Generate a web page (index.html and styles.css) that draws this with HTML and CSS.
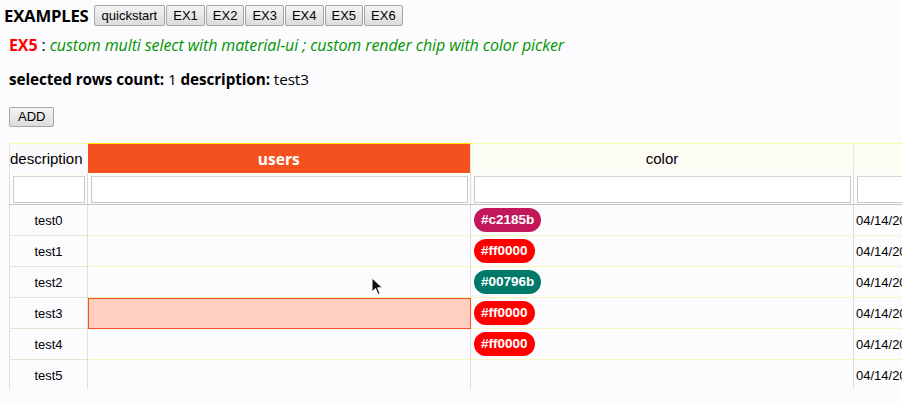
FILE: index.html
```html
<!DOCTYPE html>
<html>
<head>
<meta charset="utf-8">
<link rel="stylesheet" href="styles.css">
</head>
<body>
<div class="topbar">
  <span class="title">EXAMPLES</span>
  <div class="btns">
    <button class="btn">quickstart</button><button class="btn">EX1</button><button class="btn">EX2</button><button class="btn">EX3</button><button class="btn">EX4</button><button class="btn">EX5</button><button class="btn">EX6</button>
  </div>
</div>
<p class="desc"><span class="ex">EX5</span> : <em class="green">custom multi select with material-ui ; custom render chip with color picker</em></p>
<p class="sel"><b>selected rows count:</b> 1 <b>description:</b> test3</p>
<div class="addrow"><button class="btn add">ADD</button></div>
<div class="grid">
  <table>
    <colgroup>
      <col class="c-desc"><col class="c-users"><col class="c-color"><col class="c-date">
    </colgroup>
    <thead>
      <tr class="hdr">
        <th class="h-desc">description</th>
        <th class="h-users">users</th>
        <th class="h-color">color</th>
        <th class="h-date"></th>
      </tr>
      <tr class="filters">
        <td><input class="f"></td>
        <td><input class="f"></td>
        <td><input class="f"></td>
        <td><input class="f"></td>
      </tr>
    </thead>
    <tbody>
      <tr><td class="d">test0</td><td class="u"></td><td class="c"><span class="chip" style="background:#c2185b">#c2185b</span></td><td class="dt">04/14/20</td></tr>
      <tr><td class="d">test1</td><td class="u"></td><td class="c"><span class="chip" style="background:#ff0000">#ff0000</span></td><td class="dt">04/14/20</td></tr>
      <tr><td class="d">test2</td><td class="u"></td><td class="c"><span class="chip" style="background:#00796b">#00796b</span></td><td class="dt">04/14/20</td></tr>
      <tr><td class="d">test3</td><td class="u selected"></td><td class="c"><span class="chip" style="background:#ff0000">#ff0000</span></td><td class="dt">04/14/20</td></tr>
      <tr><td class="d">test4</td><td class="u"></td><td class="c"><span class="chip" style="background:#ff0000">#ff0000</span></td><td class="dt">04/14/20</td></tr>
      <tr><td class="d">test5</td><td class="u"></td><td class="c"></td><td class="dt">04/14/20</td></tr>
    </tbody>
  </table>
</div>
<svg class="cursor" width="14" height="20" viewBox="0 0 14 20"><path d="M1 1 L1 15 L4.5 11.5 L7 17.5 L9 16.6 L6.6 10.8 L11.5 10.8 Z" fill="#111" stroke="#fff" stroke-width="1"/></svg>
</body>
</html>
```
FILE: styles.css
```css
html, body { margin: 0; padding: 0; }
body {
  background: #fcfcff;
  font-family: "Liberation Sans", Arial, sans-serif;
  color: #000;
  width: 902px;
  height: 406px;
  overflow: hidden;
  position: relative;
}
.topbar {
  display: flex;
  align-items: center;
  padding: 5px 0 0 4px;
  height: 21px;
}
.title {
  font-family: "Open Sans", sans-serif;
  font-weight: 700;
  font-size: 16.7px;
  letter-spacing: -0.2px;
  margin-right: 5px;
}
.btns { display: flex; gap: 0; }
.btn {
  font-family: "Liberation Sans", Arial, sans-serif;
  font-size: 13px;
  height: 21px;
  padding: 0 6px;
  margin: 0 1px 0 0;
  border: 1px solid #a6a6a6;
  border-radius: 2px;
  background: linear-gradient(#f4f4f4, #dcdcdc);
  color: #000;
  line-height: 19px;
}
.btns .btn:first-child { padding: 0 7px; }
.desc {
  margin: 9px 0 0 9px;
  font-family: "Open Sans", sans-serif;
  font-size: 16px;
  height: 20px;
  line-height: 20px;
  letter-spacing: -0.1px;
}
.ex { color: #ff0000; font-weight: 700; }
.green { color: #009400; }
.sel {
  margin: 14px 0 0 9px;
  font-family: "Open Sans", sans-serif;
  font-size: 15.3px;
  height: 20px;
  line-height: 20px;
  letter-spacing: -0.1px;
}
.addrow { padding: 18px 0 0 9px; height: 20px; }
.btn.add { height: 20px; padding: 0 8px; line-height: 18px; }
.grid {
  margin: 16px 0 0 9px;
  width: 893px;
  height: 246px;
  overflow: hidden;
}
table {
  border-collapse: collapse;
  table-layout: fixed;
  width: 1100px;
}
.c-desc { width: 78px; }
.c-users { width: 383px; }
.c-color { width: 383px; }
.c-date { width: 256px; }
th, td { padding: 0; }
.hdr th {
  height: 29px;
  font-weight: 400;
  font-size: 15px;
  border-top: 1px solid #fbfbb0;
  border-left: 1px solid #e6e6e6;
  background: #fdfdf6;
}
.hdr .h-desc { text-align: left; background: #fafafd; }
.hdr .h-users {
  background: #f4511e;
  color: #fff;
  font-family: "Open Sans", sans-serif;
  font-weight: 700;
  font-size: 15.5px;
  border-top: 1px solid #ffe000;
  border-left: none;
}
.filters td {
  height: 31px;
  padding: 3px 2px 1px 3px;
  box-sizing: border-box;
  border-left: 1px solid #dadada;
  border-bottom: 1px solid #c4c4c4;
  background: #fdfdf8;
}
.f {
  display: block;
  box-sizing: border-box;
  width: 100%;
  height: 27px;
  border: 1px solid #c8c8c8;
  border-top-color: #d4d4d4;
  background: #fff;
  margin: 0;
}
tbody td {
  height: 30px;
  border-bottom: 1px solid #f6f6c0;
  border-left: 1px solid #dcdcdc;
  font-size: 13px;
  background: #fcfcff;
}
tbody td.d { text-align: center; border-bottom-color: #e4e4d6; }
tbody td.u { border-left-color: #e0e0e0; }
tbody td.c { padding-left: 3px; }
tbody td.dt { padding-left: 2px; white-space: nowrap; }
tbody td.selected {
  background: #ffcfc0;
  outline: 1px solid #f4511e;
  outline-offset: -1px;
}
.chip {
  display: inline-block;
  height: 24px;
  line-height: 24px;
  padding: 0 7px;
  border-radius: 12px;
  color: #fff;
  font-weight: 700;
  font-size: 13.5px;
  vertical-align: middle;
}
.cursor {
  position: absolute;
  left: 371px;
  top: 277px;
}
```
